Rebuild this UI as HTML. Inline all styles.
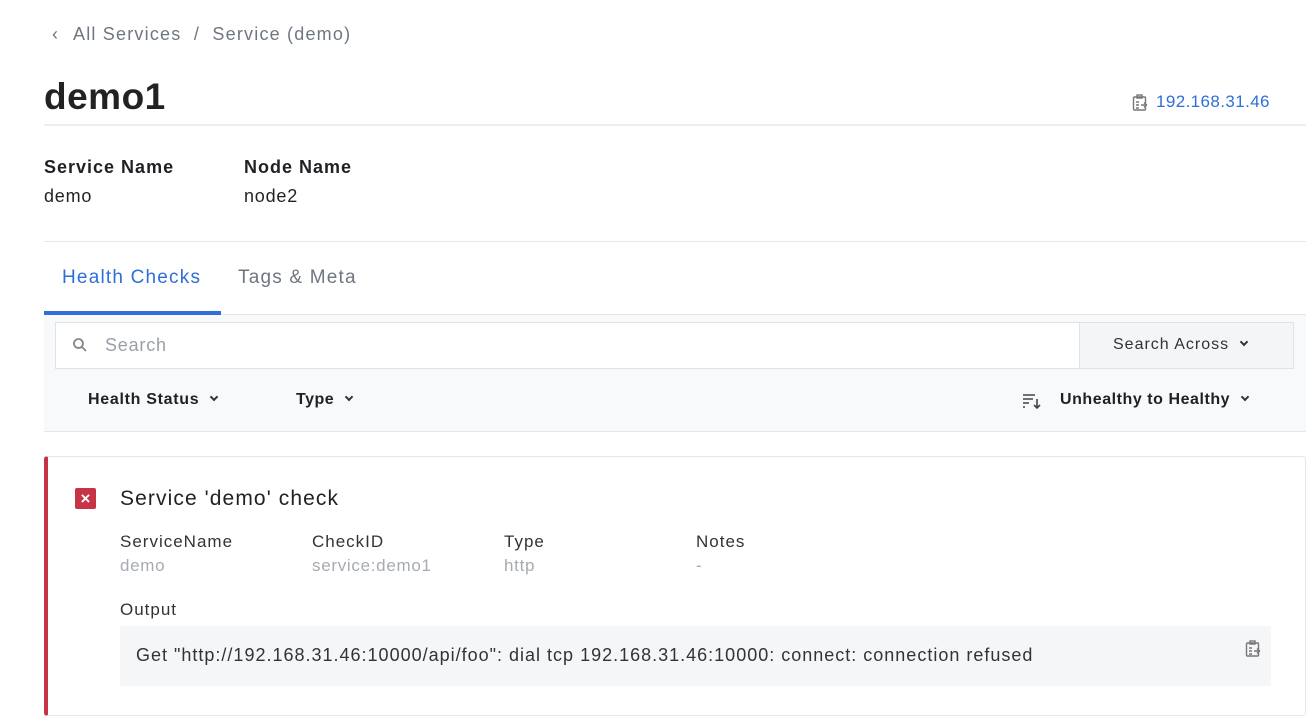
<!DOCTYPE html>
<html><head><style>
*{margin:0;padding:0;box-sizing:border-box}
body{width:1314px;height:718px;background:#fff;font-family:"Liberation Sans",sans-serif;color:#1f2124;position:relative;overflow:hidden}
.a{position:absolute;white-space:nowrap}
.chev{display:inline-block;width:6px;height:6px;border-right:2px solid #333;border-bottom:2px solid #333;transform:rotate(45deg);margin-left:12px;vertical-align:4px}
</style></head><body>
<div class="a" style="left:52px;top:24px;font-size:18px;color:#6f7682">‹</div>
<div class="a" style="left:73px;top:24px;font-size:18px;color:#6f7682;letter-spacing:1.2px">All Services&nbsp;&nbsp;/&nbsp;&nbsp;Service (demo)</div>
<div class="a" style="left:44px;top:76px;font-size:37px;font-weight:bold;color:#222;letter-spacing:0.5px">demo1</div>
<svg class="a" style="left:1132px;top:94px" width="16" height="17" viewBox="0 0 16 17" fill="none" stroke="#777" stroke-width="1.4"><rect x="1.5" y="3" width="12" height="13" rx="1"/><rect x="5" y="1" width="5" height="3"/><path d="M4 8h3M4 11h3M4 14h3M9 11h6M12 8.5l2.5 2.5-2.5 2.5"/></svg>
<div class="a" style="left:1156px;top:92px;font-size:17px;color:#2f6fd8;letter-spacing:0.4px">192.168.31.46</div>
<div class="a" style="left:44px;top:124px;width:1262px;height:2px;background:#ebedf0"></div>
<div class="a" style="left:44px;top:157px;font-size:18px;font-weight:bold;letter-spacing:1px">Service Name</div>
<div class="a" style="left:44px;top:186px;font-size:18px;letter-spacing:0.8px">demo</div>
<div class="a" style="left:244px;top:157px;font-size:18px;font-weight:bold;letter-spacing:1px">Node Name</div>
<div class="a" style="left:244px;top:186px;font-size:18px;letter-spacing:0.8px">node2</div>
<div class="a" style="left:44px;top:241px;width:1262px;height:1px;background:#e5e7eb"></div>
<div class="a" style="left:62px;top:267px;font-size:19px;color:#2f6fd8;letter-spacing:1.2px">Health Checks</div>
<div class="a" style="left:238px;top:267px;font-size:19px;color:#6f7682;letter-spacing:1.2px">Tags &amp; Meta</div>
<div class="a" style="left:44px;top:314px;width:1262px;height:1px;background:#e5e7eb"></div>
<div class="a" style="left:44px;top:311px;width:177px;height:4px;background:#2f6fd8"></div>
<div class="a" style="left:44px;top:315px;width:1262px;height:117px;background:#f8f9fb;border-bottom:1px solid #e5e7eb"></div>
<div class="a" style="left:55px;top:322px;width:1239px;height:47px;background:#fff;border:1px solid #dfe2e6"></div>
<div class="a" style="left:1079px;top:322px;width:215px;height:47px;background:#f4f5f7;border:1px solid #dfe2e6"></div>
<svg class="a" style="left:72px;top:337px" width="16" height="16" viewBox="0 0 16 16" fill="none" stroke="#888" stroke-width="1.8"><circle cx="6.5" cy="6.5" r="4.5"/><path d="M10 10l4 4"/></svg>
<div class="a" style="left:105px;top:335px;font-size:18px;color:#9aa0a8;letter-spacing:0.8px">Search</div>
<div class="a" style="left:1113px;top:336px;font-size:16px;color:#333;letter-spacing:1px">Search Across<span class="chev"></span></div>
<div class="a" style="left:88px;top:391px;font-size:16px;font-weight:bold;letter-spacing:0.7px">Health Status<span class="chev"></span></div>
<div class="a" style="left:296px;top:391px;font-size:16px;font-weight:bold;letter-spacing:0.5px">Type<span class="chev"></span></div>
<svg class="a" style="left:1022px;top:393px" width="20" height="16" viewBox="0 0 20 16" fill="none" stroke="#444" stroke-width="1.6"><path d="M1 2h12M1 6h10M1 10h6M1 14h2M15 6v9M12 12l3 3 3-3"/></svg>
<div class="a" style="left:1060px;top:391px;font-size:16px;font-weight:bold;letter-spacing:0.55px">Unhealthy to Healthy<span class="chev"></span></div>
<div class="a" style="left:44px;top:456px;width:1262px;height:260px;border:1px solid #e5e7eb;border-left:4px solid #c73445;border-radius:3px;background:#fff"></div>
<div class="a" style="left:75px;top:488px;width:21px;height:21px;background:#c73445;border-radius:2px;color:#fff;font-size:17px;line-height:21px;text-align:center;font-weight:bold">×</div>
<div class="a" style="left:120px;top:487px;font-size:21px;color:#222;letter-spacing:1.1px">Service 'demo' check</div>
<div class="a" style="left:120px;top:532px;font-size:17px;color:#333;letter-spacing:1px">ServiceName</div>
<div class="a" style="left:120px;top:556px;font-size:17px;color:#a6abb3;letter-spacing:0.7px">demo</div>
<div class="a" style="left:312px;top:532px;font-size:17px;color:#333;letter-spacing:1px">CheckID</div>
<div class="a" style="left:312px;top:556px;font-size:17px;color:#a6abb3;letter-spacing:0.7px">service:demo1</div>
<div class="a" style="left:504px;top:532px;font-size:17px;color:#333;letter-spacing:1px">Type</div>
<div class="a" style="left:504px;top:556px;font-size:17px;color:#a6abb3;letter-spacing:0.7px">http</div>
<div class="a" style="left:696px;top:532px;font-size:17px;color:#333;letter-spacing:1px">Notes</div>
<div class="a" style="left:696px;top:556px;font-size:17px;color:#a6abb3">-</div>
<div class="a" style="left:120px;top:600px;font-size:17px;color:#333;letter-spacing:1px">Output</div>
<div class="a" style="left:120px;top:626px;width:1151px;height:60px;background:#f5f6f8"></div>
<div class="a" style="left:136px;top:645px;font-size:18px;color:#333;letter-spacing:1px">Get "http://192.168.31.46:10000/api/foo": dial tcp 192.168.31.46:10000: connect: connection refused</div>
<svg class="a" style="left:1245px;top:640px" width="16" height="17" viewBox="0 0 16 17" fill="none" stroke="#777" stroke-width="1.4"><rect x="1.5" y="3" width="12" height="13" rx="1"/><rect x="5" y="1" width="5" height="3"/><path d="M4 8h3M4 11h3M4 14h3M9 11h6M12 8.5l2.5 2.5-2.5 2.5"/></svg>
</body></html>
